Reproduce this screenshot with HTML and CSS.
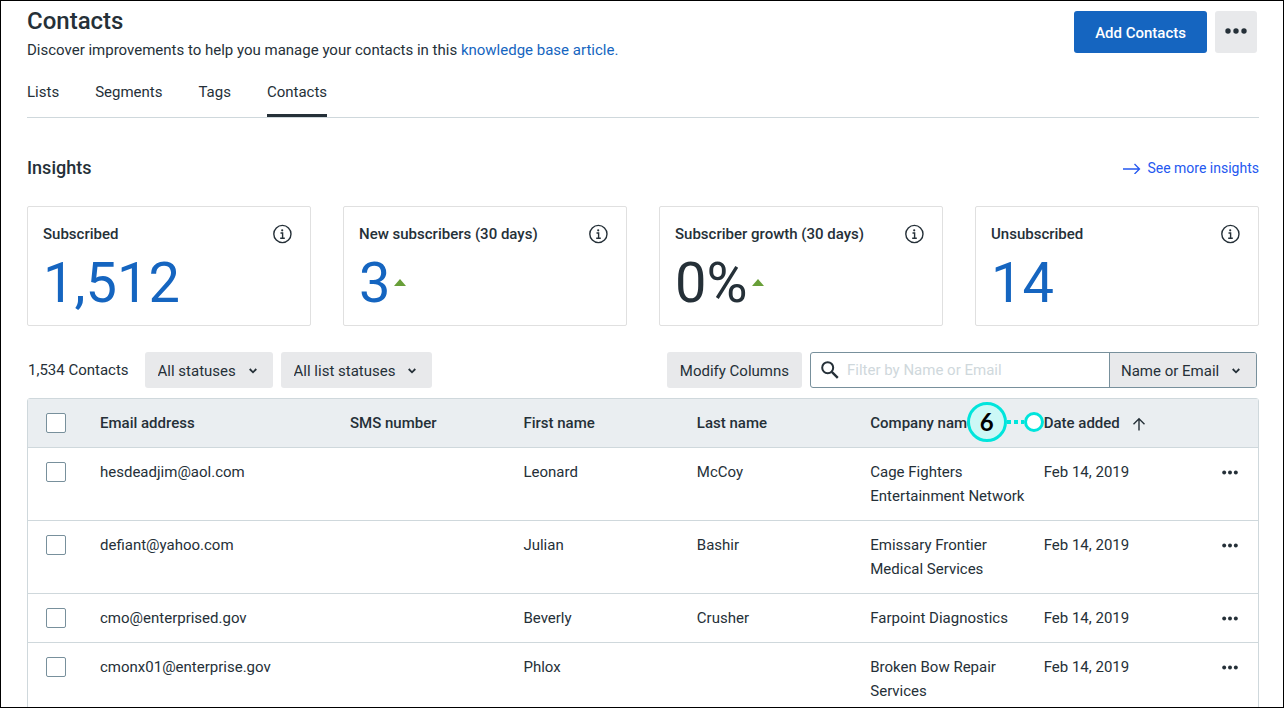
FILE: index.html
```
<!DOCTYPE html>
<html lang="en">
<head>
  <meta charset="UTF-8" />
  <meta name="viewport" content="width=device-width, initial-scale=1.0"/>
  <title>Contacts</title>
  <link rel="stylesheet" href="styles.css">
</head>
<body>
  <!-- shared icons -->
  <svg class="sprite" aria-hidden="true">
    <symbol id="icon-info" viewBox="0 0 20 20">
      <circle cx="10.400" cy="10" r="8.600" fill="none" stroke="currentColor" stroke-width="1.400"/>
      <circle cx="10.200" cy="6.300" r="1.100" fill="currentColor"/>
      <path d="M8.500 9h2.100v5M8.200 14.200h4.600" fill="none" stroke="currentColor" stroke-width="1.400"/>
    </symbol>
    <symbol id="icon-dots" viewBox="0 0 22 6">
      <g fill="currentColor"><circle cx="3" cy="3" r="2.700"/><circle cx="11" cy="3" r="2.700"/><circle cx="19" cy="3" r="2.700"/></g>
    </symbol>
    <symbol id="icon-chevron" viewBox="0 0 8 6">
      <path d="M.700 1l3.300 3.300L7.300 1" fill="none" stroke="currentColor" stroke-width="1.800"/>
    </symbol>
  </svg>

  <header class="page-header">
    <div>
      <h1>Contacts</h1>
      <p>Discover improvements to help you manage your contacts in this <a href="#">knowledge base article.</a></p>
    </div>
    <div class="header-actions">
      <button class="btn btn-primary" type="button">Add Contacts</button>
      <button class="btn btn-more" type="button" aria-label="More actions"><svg width="22" height="6"><use href="#icon-dots"/></svg></button>
    </div>
  </header>

  <nav class="tabs">
    <a href="#">Lists</a>
    <a href="#">Segments</a>
    <a href="#">Tags</a>
    <a href="#" class="active">Contacts</a>
  </nav>

  <section>
    <div class="insights-head">
      <h2>Insights</h2>
      <a href="#">
        <svg width="18" height="12" viewBox="0 0 18 12"><path d="M0 7h16M11.500 2l5 5-5 5" fill="none" stroke="currentColor" stroke-width="1.300"/></svg>
        See more insights
      </a>
    </div>
    <div class="cards">
      <div class="card">
        <div class="card-head"><h3>Subscribed</h3><svg width="20" height="20"><use href="#icon-info"/></svg></div>
        <div class="stat">1,512</div>
      </div>
      <div class="card">
        <div class="card-head"><h3>New subscribers (30 days)</h3><svg width="20" height="20"><use href="#icon-info"/></svg></div>
        <div class="stat">3<span class="trend-up"></span></div>
      </div>
      <div class="card">
        <div class="card-head"><h3>Subscriber growth (30 days)</h3><svg width="20" height="20"><use href="#icon-info"/></svg></div>
        <div class="stat stat-dark">0%<span class="trend-up"></span></div>
      </div>
      <div class="card">
        <div class="card-head"><h3>Unsubscribed</h3><svg width="20" height="20"><use href="#icon-info"/></svg></div>
        <div class="stat">14</div>
      </div>
    </div>
  </section>

  <div class="toolbar">
    <span class="count">1,534 Contacts</span>
    <div class="select">
      <select aria-label="Status"><option>All statuses</option></select>
      <svg width="8" height="6"><use href="#icon-chevron"/></svg>
    </div>
    <div class="select">
      <select aria-label="List status"><option>All list statuses</option></select>
      <svg width="8" height="6"><use href="#icon-chevron"/></svg>
    </div>
    <button class="btn btn-columns" type="button">Modify Columns</button>
    <div class="search">
      <svg width="18" height="18" viewBox="0 0 18 18"><circle cx="6.700" cy="6.700" r="5.500" fill="none" stroke="currentColor" stroke-width="2"/><path d="M10.800 10.800l6 6" stroke="currentColor" stroke-width="2.400"/></svg>
      <input type="text" placeholder="Filter by Name or Email" aria-label="Filter contacts">
      <div class="select">
        <select aria-label="Filter field"><option>Name or Email</option></select>
        <svg width="8" height="6"><use href="#icon-chevron"/></svg>
      </div>
    </div>
  </div>

  <table class="contacts">
    <colgroup>
      <col class="col-check"><col class="col-email"><col class="col-data"><col class="col-data"><col class="col-data"><col class="col-data"><col>
      <col class="col-menu">
    </colgroup>
    <thead>
      <tr>
        <th><input type="checkbox" aria-label="Select all"></th>
        <th>Email address</th>
        <th>SMS number</th>
        <th>First name</th>
        <th>Last name</th>
        <th>Company name</th>
        <th class="sorted">
          <div class="callout"><span class="callout-number">6</span><span class="callout-line"></span><span class="callout-dot"></span></div>
          Date added
          <svg width="14" height="14" viewBox="0 0 14 14"><path d="M7 13.500V2M1.500 7.200L7 1.700l5.500 5.500" fill="none" stroke="currentColor" stroke-width="1.400"/></svg>
        </th>
        <th></th>
      </tr>
    </thead>
    <tbody>
      <tr>
        <td><input type="checkbox" aria-label="Select hesdeadjim@aol.com"></td>
        <td>hesdeadjim@aol.com</td><td></td><td>Leonard</td><td>McCoy</td>
        <td>Cage Fighters Entertainment Network</td><td>Feb 14, 2019</td>
        <td><button class="row-menu" type="button" aria-label="Row actions"><svg width="16" height="5"><use href="#icon-dots"/></svg></button></td>
      </tr>
      <tr>
        <td><input type="checkbox" aria-label="Select defiant@yahoo.com"></td>
        <td>defiant@yahoo.com</td><td></td><td>Julian</td><td>Bashir</td>
        <td>Emissary Frontier Medical Services</td><td>Feb 14, 2019</td>
        <td><button class="row-menu" type="button" aria-label="Row actions"><svg width="16" height="5"><use href="#icon-dots"/></svg></button></td>
      </tr>
      <tr>
        <td><input type="checkbox" aria-label="Select cmo@enterprised.gov"></td>
        <td>cmo@enterprised.gov</td><td></td><td>Beverly</td><td>Crusher</td>
        <td>Farpoint Diagnostics</td><td>Feb 14, 2019</td>
        <td><button class="row-menu" type="button" aria-label="Row actions"><svg width="16" height="5"><use href="#icon-dots"/></svg></button></td>
      </tr>
      <tr>
        <td><input type="checkbox" aria-label="Select cmonx01@enterprise.gov"></td>
        <td>cmonx01@enterprise.gov</td><td></td><td>Phlox</td><td></td>
        <td>Broken Bow Repair Services</td><td>Feb 14, 2019</td>
        <td><button class="row-menu" type="button" aria-label="Row actions"><svg width="16" height="5"><use href="#icon-dots"/></svg></button></td>
      </tr>
    </tbody>
  </table>
</body>
</html>
```

FILE: styles.css
```
* {
  box-sizing: border-box;
}
body {
  margin: 0;
  height: 100vh;
  overflow: hidden;
  padding: 0 24px 0 26px;
  border: 1px solid #000;
  background: #fff;
  color: #253038;
  font-family: Roboto, sans-serif;
  font-size: 15px;
  line-height: 24px;
}
h1, h2, h3, p {
  margin: 0;
}
a {
  text-decoration: none;
}
button, select, input {
  margin: 0;
  font: inherit;
  color: inherit;
}
svg {
  flex-shrink: 0;
}
.sprite {
  position: absolute;
  width: 0;
  height: 0;
}

/* header */
.page-header {
  display: flex;
  justify-content: space-between;
  padding: 4px 2px 0 0;
}
h1 {
  margin-bottom: 1px;
  font-size: 24px;
  font-weight: 500;
  line-height: 32px;
}
.page-header p a {
  color: #1565c0;
}
.header-actions {
  display: flex;
  gap: 8px;
  padding-top: 6px;
}
.btn {
  height: 36px;
  padding: 2px 13px 0;
  border: none;
  border-radius: 3px;
  background: #e8e9eb;
}
.btn-primary {
  height: 42px;
  padding: 2px 21px 0;
  background: #1565c0;
  color: #fff;
  font-weight: 500;
}
.btn-more {
  display: flex;
  align-items: center;
  width: 42px;
  height: 42px;
  padding: 0 10px 2px;
}

/* tabs */
.tabs {
  display: flex;
  gap: 36px;
  margin-top: 14px;
  border-bottom: 1px solid #cfd8dc;
}
.tabs a {
  padding: 4px 0 10px;
  border-bottom: 3px solid transparent;
  color: inherit;
}
.tabs a.active {
  border-bottom-color: #253038;
}

/* insights */
.insights-head {
  display: flex;
  justify-content: space-between;
  align-items: center;
  margin: 38px 0 26px;
}
h2 {
  font-size: 18px;
  font-weight: 500;
}
.insights-head a {
  display: flex;
  align-items: center;
  gap: 6px;
  color: #2458f0;
  font-size: 14px;
}
.cards {
  display: grid;
  grid-template-columns: repeat(4, 1fr);
  gap: 32px;
}
.card {
  height: 120px;
  padding: 15px 18px 0 15px;
  border: 1px solid #e0e0e0;
  border-radius: 2px;
}
.card-head {
  display: flex;
  justify-content: space-between;
  align-items: center;
}
h3 {
  font-size: 15px;
  font-weight: 500;
}
.stat {
  display: flex;
  align-items: center;
  gap: 4px;
  color: #1565c0;
  font-size: 56px;
  line-height: 74px;
}
.stat-dark {
  color: #253038;
}
.trend-up {
  margin-bottom: 2px;
  border: 6px solid transparent;
  border-top: none;
  border-bottom: 7px solid #689f38;
}

/* toolbar */
.toolbar {
  display: flex;
  align-items: center;
  gap: 8px;
  padding: 26px 2px 10px 1px;
}
.count {
  margin-right: 8px;
}
.select {
  position: relative;
  display: flex;
}
.select select {
  height: 36px;
  padding: 2px 36px 0 13px;
  border: none;
  border-radius: 3px;
  background: #e8e9eb;
  appearance: none;
}
.select svg {
  position: absolute;
  top: 16px;
  right: 16px;
  pointer-events: none;
}
.btn-columns {
  margin-left: auto;
}
.search {
  display: flex;
  align-items: center;
  width: 447px;
  height: 36px;
  padding-left: 10px;
  border: 1px solid #78909c;
  border-radius: 3px;
  overflow: hidden;
}
.search input {
  flex: 1;
  min-width: 0;
  height: 34px;
  padding: 0 8px;
  border: none;
  outline: none;
}
.search input::placeholder {
  color: #cfd8dc;
}
.search select {
  padding-left: 11px;
  border-left: 1px solid #78909c;
  border-radius: 0;
}

/* contacts table */
.contacts {
  width: 100%;
  table-layout: fixed;
  border: 1px solid #cfd8dc;
  border-radius: 3px;
  border-spacing: 0;
}
.col-check {
  width: 72px;
}
.col-email {
  width: 250px;
}
.col-data {
  width: 14.1%;
}
.col-menu {
  width: 36px;
}
.contacts th,
.contacts td {
  padding: 12px 12px 12px 0;
  text-align: left;
  vertical-align: top;
}
.contacts th {
  background: #eaeef1;
  font-weight: 500;
  white-space: nowrap;
}
.contacts td {
  border-top: 1px solid #cfd8dc;
}
.contacts th:first-child,
.contacts td:first-child {
  padding-left: 18px;
}
.contacts th:last-child,
.contacts td:last-child {
  padding-right: 0;
}
.contacts input {
  display: block;
  width: 20px;
  height: 20px;
  margin: 2px 0;
  border: 1px solid #78909c;
  border-radius: 2px;
  background: #fff;
  appearance: none;
}
.sorted {
  position: relative;
}
.sorted > svg {
  margin-left: 8px;
  vertical-align: -3px;
}
.row-menu {
  display: flex;
  align-items: center;
  height: 24px;
  padding: 0;
  border: none;
  background: none;
}

/* numbered marker pointing at the sorted column */
.callout {
  position: absolute;
  top: 3px;
  right: 100%;
  display: flex;
  align-items: center;
}
.callout-number {
  width: 40px;
  height: 40px;
  border: 3px solid #00e5dc;
  border-radius: 50%;
  background: #ccf8f6;
  color: #000;
  font-family: Lato, sans-serif;
  font-size: 24px;
  font-weight: 700;
  line-height: 34px;
  text-align: center;
}
.callout-line {
  width: 17px;
  height: 4px;
  background: repeating-linear-gradient(90deg, #00e5dc 0 4px, transparent 4px 7px);
}
.callout-dot {
  width: 20px;
  height: 20px;
  border: 3px solid #00e5dc;
  border-radius: 50%;
  background: #fff;
}
```
